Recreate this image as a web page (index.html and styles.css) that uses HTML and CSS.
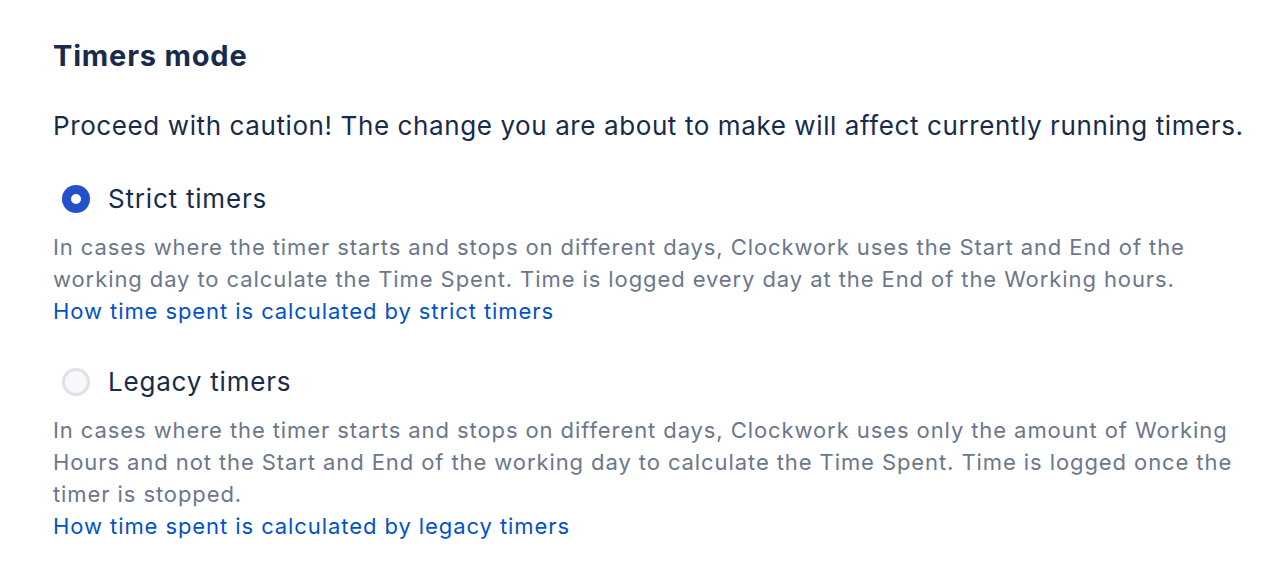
FILE: index.html
```html
<!DOCTYPE html>
<html>
<head>
<meta charset="utf-8">
<link rel="stylesheet" href="styles.css">
</head>
<body>
<main class="page">
  <h2 class="title">Timers mode</h2>
  <p class="warning">Proceed with caution! The change you are about to make will affect currently running timers.</p>
  <div class="option">
    <label class="radio-row">
      <span class="radio radio--checked"></span>
      <span class="radio-label">Strict timers</span>
    </label>
    <p class="desc">In cases where the timer starts and stops on different days, Clockwork uses the Start and End of the working day to calculate the Time Spent. Time is logged every day at the End of the Working hours.</p>
    <a class="link" href="#">How time spent is calculated by strict timers</a>
  </div>
  <div class="option">
    <label class="radio-row">
      <span class="radio"></span>
      <span class="radio-label">Legacy timers</span>
    </label>
    <p class="desc">In cases where the timer starts and stops on different days, Clockwork uses only the amount of Working Hours and not the Start and End of the working day to calculate the Time Spent. Time is logged once the timer is stopped.</p>
    <a class="link" href="#">How time spent is calculated by legacy timers</a>
  </div>
</main>
</body>
</html>
```

FILE: styles.css
```css
html, body {
  margin: 0;
  padding: 0;
  background: #ffffff;
}
body {
  font-family: Inter, "Noto Sans", sans-serif;
  color: #172B4D;
}
.page {
  padding: 38px 0 0 53px;
  width: 1200px;
}
.title {
  margin: 0;
  font-size: 29px;
  line-height: 36px;
  font-weight: 700;
  letter-spacing: 0.8px;
  color: #172B4D;
}
.warning {
  margin: 34px 0 0;
  font-size: 26px;
  line-height: 36px;
  letter-spacing: 0.6px;
  color: #172B4D;
  white-space: nowrap;
}
.option {
  margin-top: 37px;
  display: flex;
  flex-direction: column;
  align-items: flex-start;
}
.radio-row {
  display: flex;
  align-items: center;
  gap: 18px;
  height: 36px;
  padding-left: 9px;
}
.radio {
  width: 28px;
  height: 28px;
  border-radius: 50%;
  box-sizing: border-box;
  border: 3px solid #DFE1E6;
  background: #F7F8FA;
  position: relative;
}
.radio--checked {
  border: none;
  background: #2151CC;
}
.radio--checked::after {
  content: "";
  position: absolute;
  left: 9px;
  top: 9px;
  width: 10px;
  height: 10px;
  border-radius: 50%;
  background: #ffffff;
}
.radio-label {
  font-size: 26px;
  line-height: 36px;
  letter-spacing: 0.8px;
  color: #172B4D;
}
.desc {
  margin: 14px 0 0;
  font-size: 22px;
  line-height: 32px;
  letter-spacing: 0.91px;
  color: #6B778C;
}
.link {
  font-size: 22px;
  line-height: 32px;
  letter-spacing: 0.92px;
  color: #0052CC;
  text-decoration: none;
}
```
